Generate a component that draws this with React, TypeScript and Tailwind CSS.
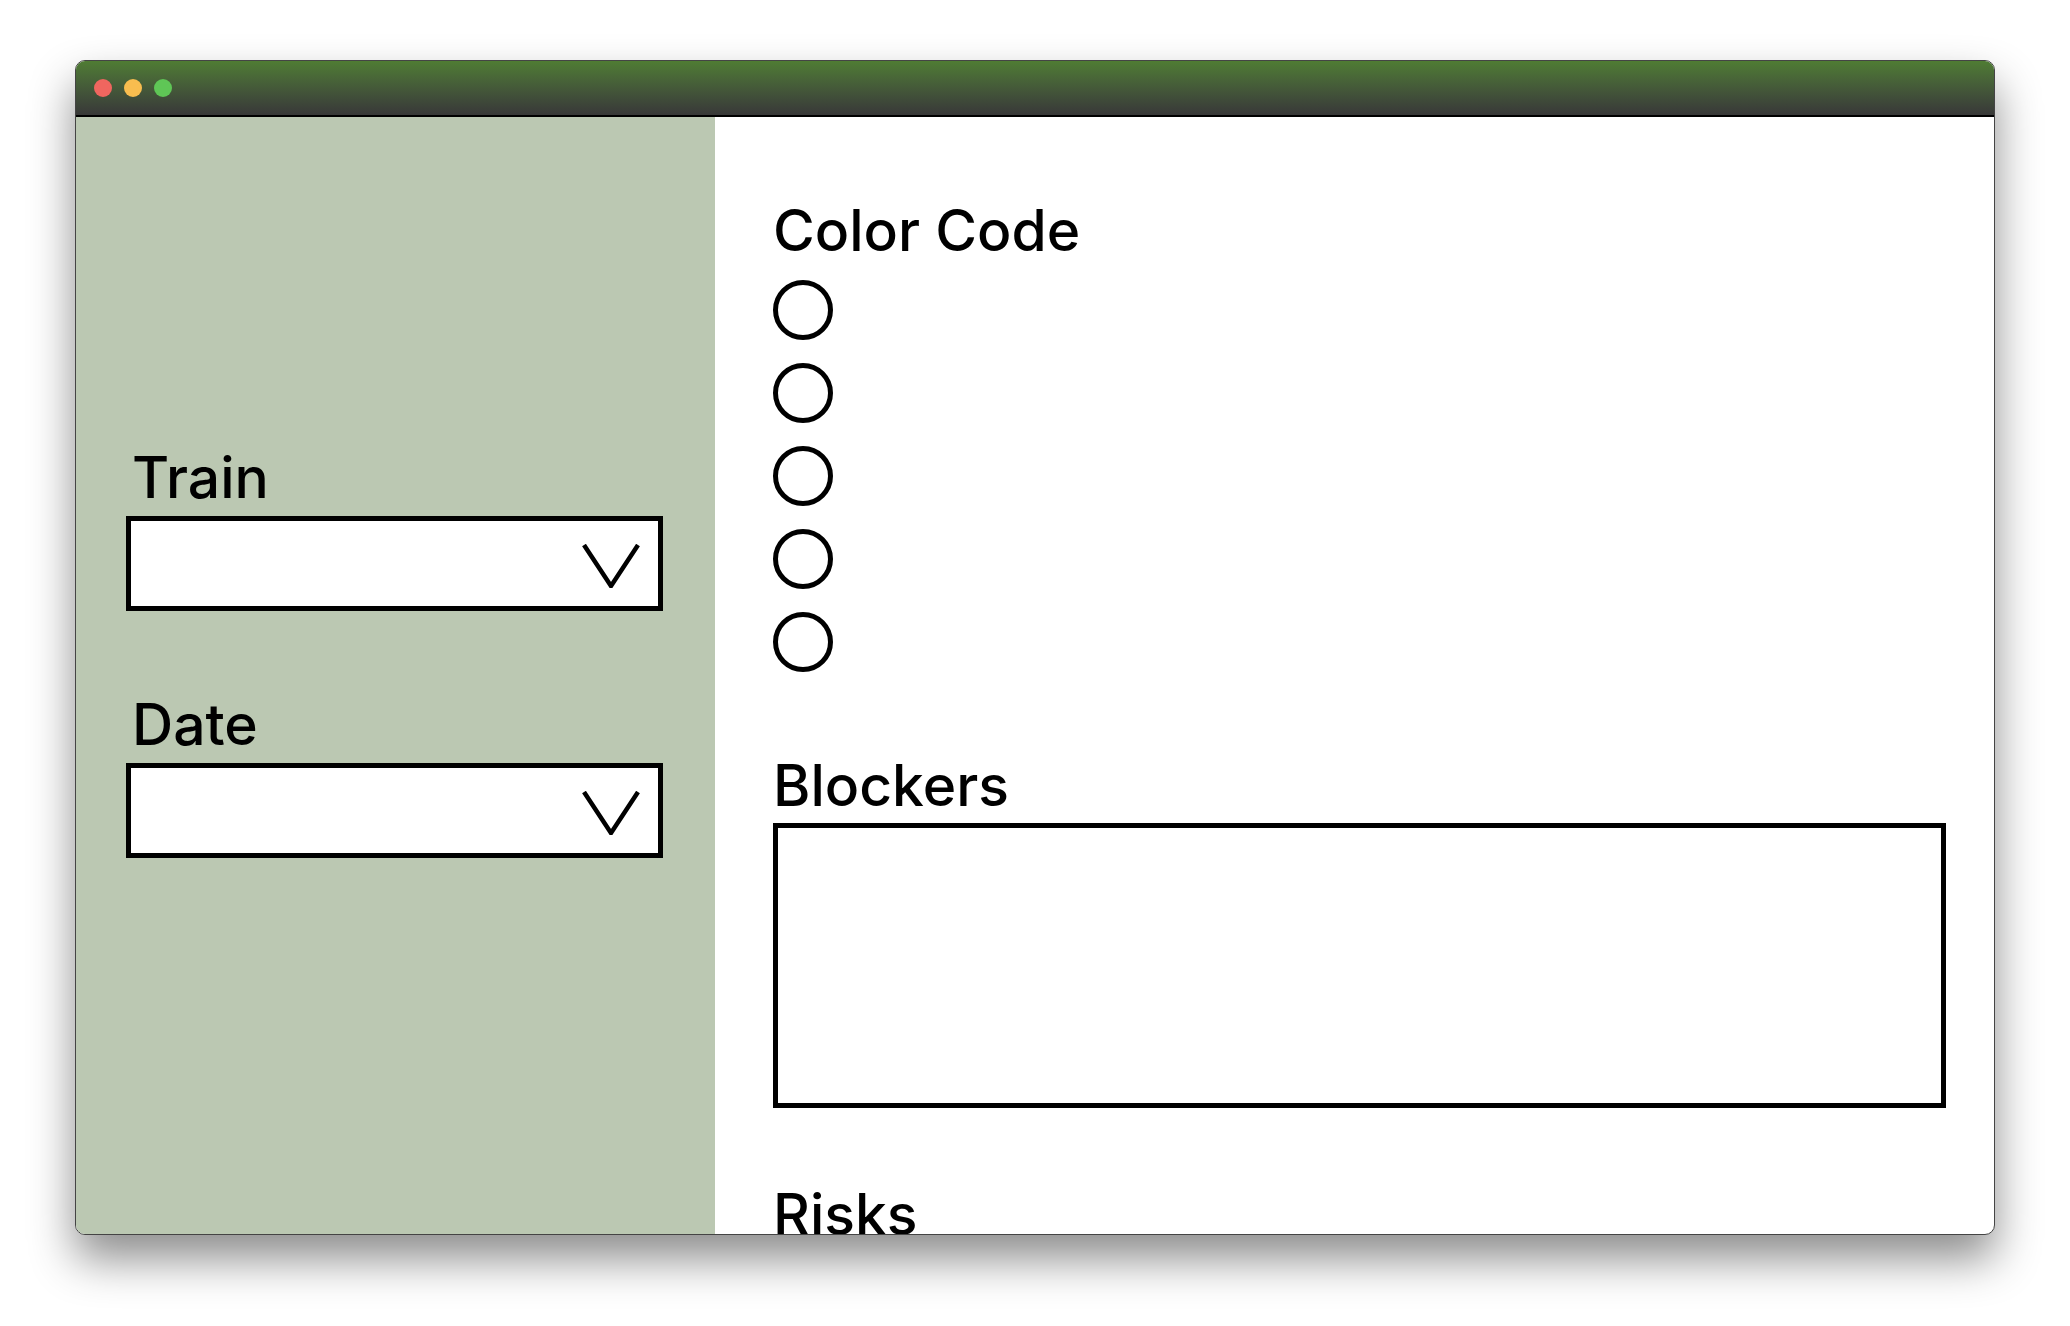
import React from 'react';

const Select: React.FC<{ label: string }> = ({ label }) => (
  <div className="flex flex-col">
    <label className="pb-[3px] pl-[6px] text-[57px] font-medium leading-[70px] text-black">{label}</label>
    <div className="flex h-[95px] w-[537px] items-center justify-end border-[5px] border-black bg-white pr-[18px]">
      <svg width="58" height="44" viewBox="0 0 58 44" fill="none" className="mt-[5px]">
        <path d="M2 1 L29 42 L56 1" stroke="black" strokeWidth="4.5" />
      </svg>
    </div>
  </div>
);

const Radio = () => <div className="h-[60px] w-[60px] rounded-full border-[5px] border-black bg-white" />;

export default function App() {
  return (
    <div className="h-[1326px] w-[2070px] overflow-hidden bg-white pl-[75px] pt-[60px] font-['Inter',sans-serif]">
      <div className="flex h-[1175px] w-[1920px] flex-col overflow-hidden rounded-[10px] border border-[#444444] bg-white shadow-[0_24px_45px_rgba(0,0,0,0.45)]">
        <div className="flex h-[56px] shrink-0 items-center gap-3 border-b-2 border-black bg-gradient-to-b from-[#4f7c33] to-[#383838] pl-[18px]">
          <span className="h-[18px] w-[18px] rounded-full bg-[#f0665f]" />
          <span className="h-[18px] w-[18px] rounded-full bg-[#f8bd4f]" />
          <span className="h-[18px] w-[18px] rounded-full bg-[#5fc656]" />
        </div>
        <div className="flex min-h-0 flex-1">
          <aside className="flex w-[639px] shrink-0 flex-col gap-[79px] bg-[#bbc8b2] pl-[50px] pt-[326px]">
            <Select label="Train" />
            <Select label="Date" />
          </aside>
          <main className="flex-1 pl-[58px] pr-[48px] pt-[79px] text-black">
            <section>
              <h2 className="text-[57px] font-medium leading-[70px]">Color Code</h2>
              <div className="mt-[14px] flex flex-col gap-[23px]">
                <Radio />
                <Radio />
                <Radio />
                <Radio />
                <Radio />
              </div>
            </section>
            <section className="mt-[79px]">
              <h2 className="pb-[2px] text-[57px] font-medium leading-[70px]">Blockers</h2>
              <div className="h-[285px] w-full border-[5px] border-black bg-white" />
            </section>
            <section className="mt-[72px]">
              <h2 className="text-[57px] font-medium leading-[70px]">Risks</h2>
            </section>
          </main>
        </div>
      </div>
    </div>
  );
}
